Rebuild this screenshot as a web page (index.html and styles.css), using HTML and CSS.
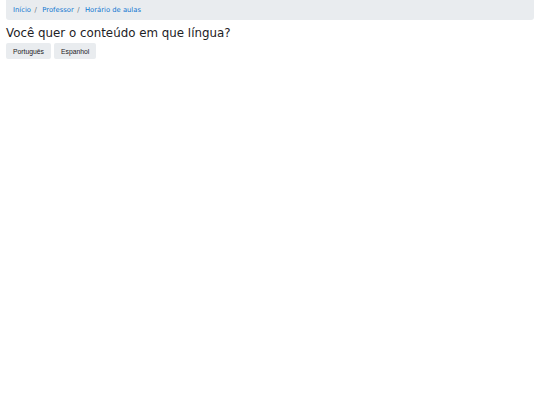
FILE: index.html
```html
<!DOCTYPE html>
<html lang="pt">
<head>
<meta charset="utf-8">
<link rel="stylesheet" href="styles.css">
</head>
<body>
<div class="page">
  <nav class="breadcrumb">
    <a href="#">Início</a><span class="sep">/</span>
    <a href="#">Professor</a><span class="sep">/</span>
    <a href="#">Horário de aulas</a>
  </nav>
  <h2 class="title">Você quer o conteúdo em que língua?</h2>
  <div class="buttons">
    <button class="btn">Português</button>
    <button class="btn">Espanhol</button>
  </div>
</div>
</body>
</html>
```
FILE: styles.css
```css
html, body { margin: 0; padding: 0; background: #fff; }
.page { padding: 0 6px; font-family: "DejaVu Sans", sans-serif; }
.breadcrumb {
  background: #e9ecef;
  border-radius: 0 0 3px 3px;
  height: 20px;
  display: flex;
  align-items: center;
  padding: 0 7px;
  font-size: 6.8px;
}
.breadcrumb a { color: #1177d1; text-decoration: none; }
.breadcrumb .sep { color: #6c757d; padding: 0 5.5px 0 3.5px; }
.title {
  margin: 4px 0 0 0;
  font-weight: normal;
  font-size: 11.85px;
  line-height: 19px;
  color: #1d2125;
}
.buttons { display: flex; gap: 3px; }
.btn {
  font-family: "Liberation Sans", Arial, sans-serif;
  font-size: 6.8px;
  background: #e9ecef;
  border: none;
  border-radius: 2px;
  height: 16px;
  padding: 0 7px;
  color: #1d2125;
}
```
